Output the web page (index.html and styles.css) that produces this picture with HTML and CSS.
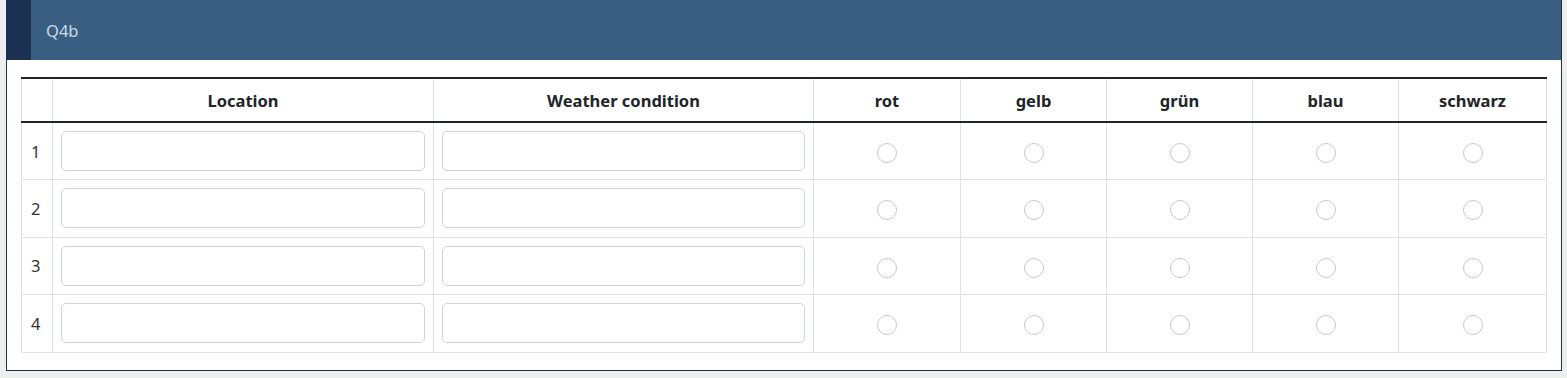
FILE: index.html
```html
<!DOCTYPE html>
<html lang="en">
<head>
    <meta charset="UTF-8">
    <title>Q4b</title>
    <link rel="stylesheet" href="styles.css">
</head>
<body>
    <div class="question">
        <div class="question-header">
            <div class="question-marker"></div>
            <div class="question-code">Q4b</div>
        </div>
        <div class="question-body">
            <table class="answer-table">
                <colgroup>
                    <col style="width: 31px">
                    <col style="width: 381px">
                    <col style="width: 380px">
                    <col style="width: 147px">
                    <col style="width: 146px">
                    <col style="width: 146px">
                    <col style="width: 146px">
                    <col style="width: 148px">
                </colgroup>
                <thead>
                    <tr>
                        <th></th>
                        <th>Location</th>
                        <th>Weather condition</th>
                        <th>rot</th>
                        <th>gelb</th>
                        <th>grün</th>
                        <th>blau</th>
                        <th>schwarz</th>
                    </tr>
                </thead>
                <tbody>
                    <tr>
                        <td class="row-num">1</td>
                        <td><input type="text" class="text-field"></td>
                        <td><input type="text" class="text-field"></td>
                        <td class="radio-cell"><input type="radio" name="r1"></td>
                        <td class="radio-cell"><input type="radio" name="r1"></td>
                        <td class="radio-cell"><input type="radio" name="r1"></td>
                        <td class="radio-cell"><input type="radio" name="r1"></td>
                        <td class="radio-cell"><input type="radio" name="r1"></td>
                    </tr>
                    <tr>
                        <td class="row-num">2</td>
                        <td><input type="text" class="text-field"></td>
                        <td><input type="text" class="text-field"></td>
                        <td class="radio-cell"><input type="radio" name="r2"></td>
                        <td class="radio-cell"><input type="radio" name="r2"></td>
                        <td class="radio-cell"><input type="radio" name="r2"></td>
                        <td class="radio-cell"><input type="radio" name="r2"></td>
                        <td class="radio-cell"><input type="radio" name="r2"></td>
                    </tr>
                    <tr>
                        <td class="row-num">3</td>
                        <td><input type="text" class="text-field"></td>
                        <td><input type="text" class="text-field"></td>
                        <td class="radio-cell"><input type="radio" name="r3"></td>
                        <td class="radio-cell"><input type="radio" name="r3"></td>
                        <td class="radio-cell"><input type="radio" name="r3"></td>
                        <td class="radio-cell"><input type="radio" name="r3"></td>
                        <td class="radio-cell"><input type="radio" name="r3"></td>
                    </tr>
                    <tr>
                        <td class="row-num">4</td>
                        <td><input type="text" class="text-field"></td>
                        <td><input type="text" class="text-field"></td>
                        <td class="radio-cell"><input type="radio" name="r4"></td>
                        <td class="radio-cell"><input type="radio" name="r4"></td>
                        <td class="radio-cell"><input type="radio" name="r4"></td>
                        <td class="radio-cell"><input type="radio" name="r4"></td>
                        <td class="radio-cell"><input type="radio" name="r4"></td>
                    </tr>
                </tbody>
            </table>
        </div>
    </div>
</body>
</html>
```

FILE: styles.css
```css
body {
    margin: 0;
    padding: 0;
    background-color: #eeeeee;
    font-family: "Noto Sans", "Open Sans", sans-serif;
    color: #212529;
}
.question {
    margin-left: 6px;
    width: 1556px;
    box-sizing: border-box;
    border: 1px solid #1b3152;
    border-top: none;
    background: #fff;
}
.question-header {
    display: flex;
    height: 60px;
    background-color: #395e82;
}
.question-marker {
    width: 24px;
    background-color: #1b3152;
}
.question-code {
    padding-left: 15px;
    line-height: 62px;
    font-size: 16.5px;
    color: #c9d9ec;
}
.question-body {
    padding: 17px 15px 17px 14px;
}
.answer-table {
    width: 1525px;
    table-layout: fixed;
    border-collapse: collapse;
    border: 1px solid #dee2e6;
    border-top: 2px solid #212529;
}
.answer-table th {
    height: 42px;
    padding: 0;
    font-size: 16.5px;
    font-weight: bold;
    text-align: center;
    border-left: 1px solid #dee2e6;
    border-bottom: 2px solid #212529;
}
.answer-table td {
    height: 57.5px;
    padding: 0 8px;
    border: 1px solid #dee2e6;
    box-sizing: border-box;
}
.answer-table .row-num {
    padding: 0 0 0 9px;
    font-size: 16.5px;
    color: #333;
}
.text-field {
    display: block;
    width: 100%;
    height: 40px;
    box-sizing: border-box;
    border: 1px solid #ced4da;
    border-radius: 5px;
    background: #fff;
    outline: none;
}
.radio-cell {
    text-align: center;
}
.radio-cell input {
    appearance: none;
    width: 20px;
    height: 20px;
    margin: 3px 0 0 0;
    border: 1px solid #c8c8c8;
    border-radius: 50%;
    background: #fff;
    vertical-align: middle;
}
```
